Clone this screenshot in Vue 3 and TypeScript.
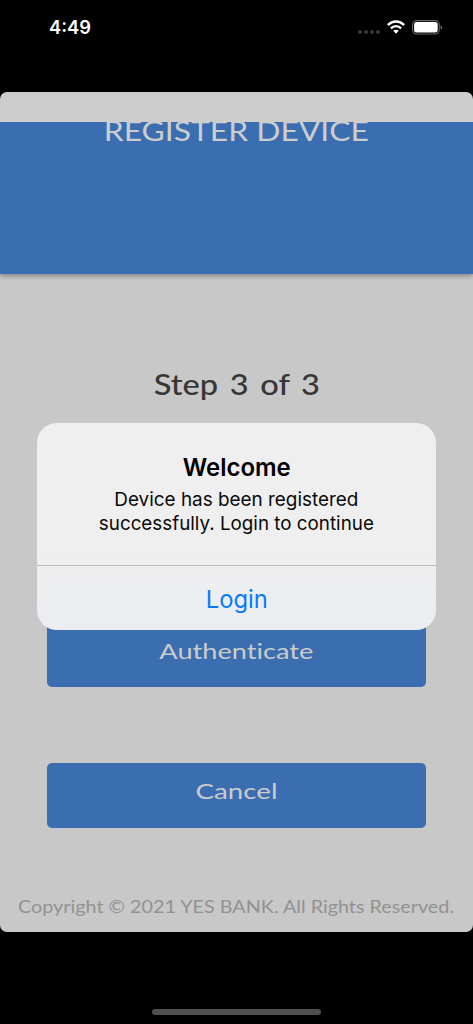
<script setup lang="ts">
import type { Directive } from 'vue'

interface Label {
  label: string
  width: number
}

const actions: Label[] = [
  { label: 'Authenticate', width: 154 },
  { label: 'Cancel', width: 82 },
]

const message: Label[] = [
  { label: 'Device has been registered', width: 244 },
  { label: 'successfully. Login to continue', width: 275 },
]

// Stretches a label horizontally so that it spans the given width.
const vFit: Directive<HTMLElement, number> = {
  mounted(el, binding) {
    el.style.transform = `scaleX(${binding.value / el.getBoundingClientRect().width})`
  },
}
</script>

<template>
  <div class="phone">
    <header class="status">
      <span v-fit="42" class="fit time">4:49</span>
      <div class="indicators">
        <div class="dots"><i v-for="n in 4" :key="n"></i></div>
        <svg class="wifi" width="18" height="14" viewBox="0 0 18 14">
          <g fill="none" stroke="#fff">
            <path d="M0.9 5.1C5.4 0.4 12.6 0.4 17.1 5.1" stroke-width="2.5" />
            <path d="M3.9 8.3C6.8 5.4 11.2 5.4 14.1 8.3" stroke-width="2.4" />
          </g>
          <path d="M6.2 10.7C7.8 9.3 10.2 9.3 11.8 10.7L9 13.7Z" fill="#fff" />
        </svg>
        <svg class="battery" width="31" height="15" viewBox="0 0 31 15">
          <rect x="0.6" y="0.6" width="26.6" height="13.4" rx="4" fill="none" stroke="#69696b" stroke-width="1.1" />
          <rect x="2.1" y="2.1" width="23.6" height="10.4" rx="2.5" fill="#fff" />
          <path d="M28.6 5.2C30.6 6 30.6 8.9 28.6 9.7Z" fill="#69696b" />
        </svg>
      </div>
    </header>

    <main class="screen">
      <div class="banner">
        <h1 v-fit="265" class="fit">REGISTER DEVICE</h1>
      </div>
      <h2 v-fit="166" class="fit step">Step 3 of 3</h2>
      <div class="actions">
        <button v-for="a in actions" :key="a.label" type="button">
          <span v-fit="a.width" class="fit">{{ a.label }}</span>
        </button>
      </div>
      <p v-fit="436" class="fit copyright">Copyright © 2021 YES BANK. All Rights Reserved.</p>
    </main>

    <div class="home"></div>

    <section class="alert" role="alertdialog">
      <div class="body">
        <h3 v-fit="108" class="fit">Welcome</h3>
        <p>
          <span v-for="line in message" :key="line.label" v-fit="line.width" class="fit">{{ line.label }}</span>
        </p>
      </div>
      <button type="button"><span v-fit="62" class="fit">Login</span></button>
    </section>
  </div>
</template>

<style>
body {
  margin: 0;
  background: #000;
}
</style>

<style scoped>
.phone {
  position: relative;
  display: flex;
  flex-direction: column;
  align-items: center;
  width: 473px;
  height: 1024px;
  overflow: hidden;
  background: #000;
  font-family: Lato, "Open Sans", sans-serif;
}

h1, h2, h3, p {
  margin: 0;
}

button {
  border: 0;
  padding: 0;
  font-family: inherit;
}

.fit {
  display: block;
  width: max-content;
  white-space: nowrap;
  font-variant-ligatures: none;
}

.status {
  display: flex;
  justify-content: space-between;
  box-sizing: border-box;
  width: 100%;
  height: 92px;
  padding: 16px 30px 0 48.5px;
}

.time {
  height: 22px;
  color: #fff;
  font: 600 18.5px/22px Inter, sans-serif;
  transform-origin: left;
}

.indicators {
  display: flex;
  align-items: flex-start;
  padding-top: 4px;
}

.dots {
  display: flex;
  gap: 2px;
  margin: 10px 7px 0 0;
}

.dots i {
  width: 4px;
  height: 4px;
  border-radius: 50%;
  background: #3a3a3b;
}

.battery {
  margin-left: 7px;
}

.screen {
  display: flex;
  flex-direction: column;
  align-items: center;
  box-sizing: border-box;
  width: 100%;
  height: 840px;
  padding-top: 30px;
  overflow: hidden;
  border-radius: 7px;
  background: linear-gradient(#cdcdcd 30px, #c8c8c8 30px);
}

.banner {
  display: flex;
  flex: none;
  justify-content: center;
  width: 100%;
  height: 152px;
  background: #3b6eb0;
  box-shadow: 0 2px 5px rgba(0, 0, 0, 0.35);
  clip-path: inset(0 0 -12px 0);
}

.banner h1 {
  height: 31px;
  margin-top: -6px;
  color: #cdcdcd;
  font-size: 26px;
  font-weight: 400;
  line-height: 31px;
}

.step {
  margin-top: 92px;
  color: #363636;
  font-size: 29px;
  font-weight: 500;
  line-height: 36px;
  word-spacing: 3px;
}

.actions {
  display: flex;
  flex-direction: column;
  gap: 75.5px;
  width: 379px;
  margin-top: 220px;
}

.actions button {
  display: flex;
  align-items: flex-start;
  justify-content: center;
  height: 65px;
  padding-top: 15.5px;
  border-radius: 5px;
  background: #3b6eb0;
  color: #cbcbcb;
  font-size: 22px;
  line-height: 26px;
}

.copyright {
  margin-top: 69px;
  color: #929292;
  font-size: 16.8px;
  line-height: 20px;
}

.home {
  width: 169px;
  height: 6px;
  margin-top: 77px;
  border-radius: 3px;
  background: #4f4f4f;
}

.alert {
  position: absolute;
  top: 423.3px;
  left: 37.3px;
  display: flex;
  flex-direction: column;
  width: 398.4px;
  height: 207px;
  border-radius: 20px;
  background: linear-gradient(#efefef, #efefef 60%, #ebedf1);
  font-family: Inter, sans-serif;
  overflow: hidden;
}

.body {
  display: flex;
  flex-direction: column;
  align-items: center;
  box-sizing: border-box;
  height: 142.7px;
  padding-top: 29.2px;
  border-bottom: 1px solid #bcbcbd;
}

.body h3 {
  color: #000;
  font-size: 24.3px;
  font-weight: 600;
  line-height: 30px;
}

.body p {
  display: flex;
  flex-direction: column;
  align-items: center;
  margin-top: 5.5px;
  color: #0a0a0a;
  font-size: 18.8px;
  line-height: 24px;
}

.alert button {
  display: flex;
  flex: 1;
  justify-content: center;
  padding-top: 18px;
  background: transparent;
  color: #087aff;
  font-size: 24.4px;
  line-height: 30px;
  align-items: flex-start;
}
</style>
